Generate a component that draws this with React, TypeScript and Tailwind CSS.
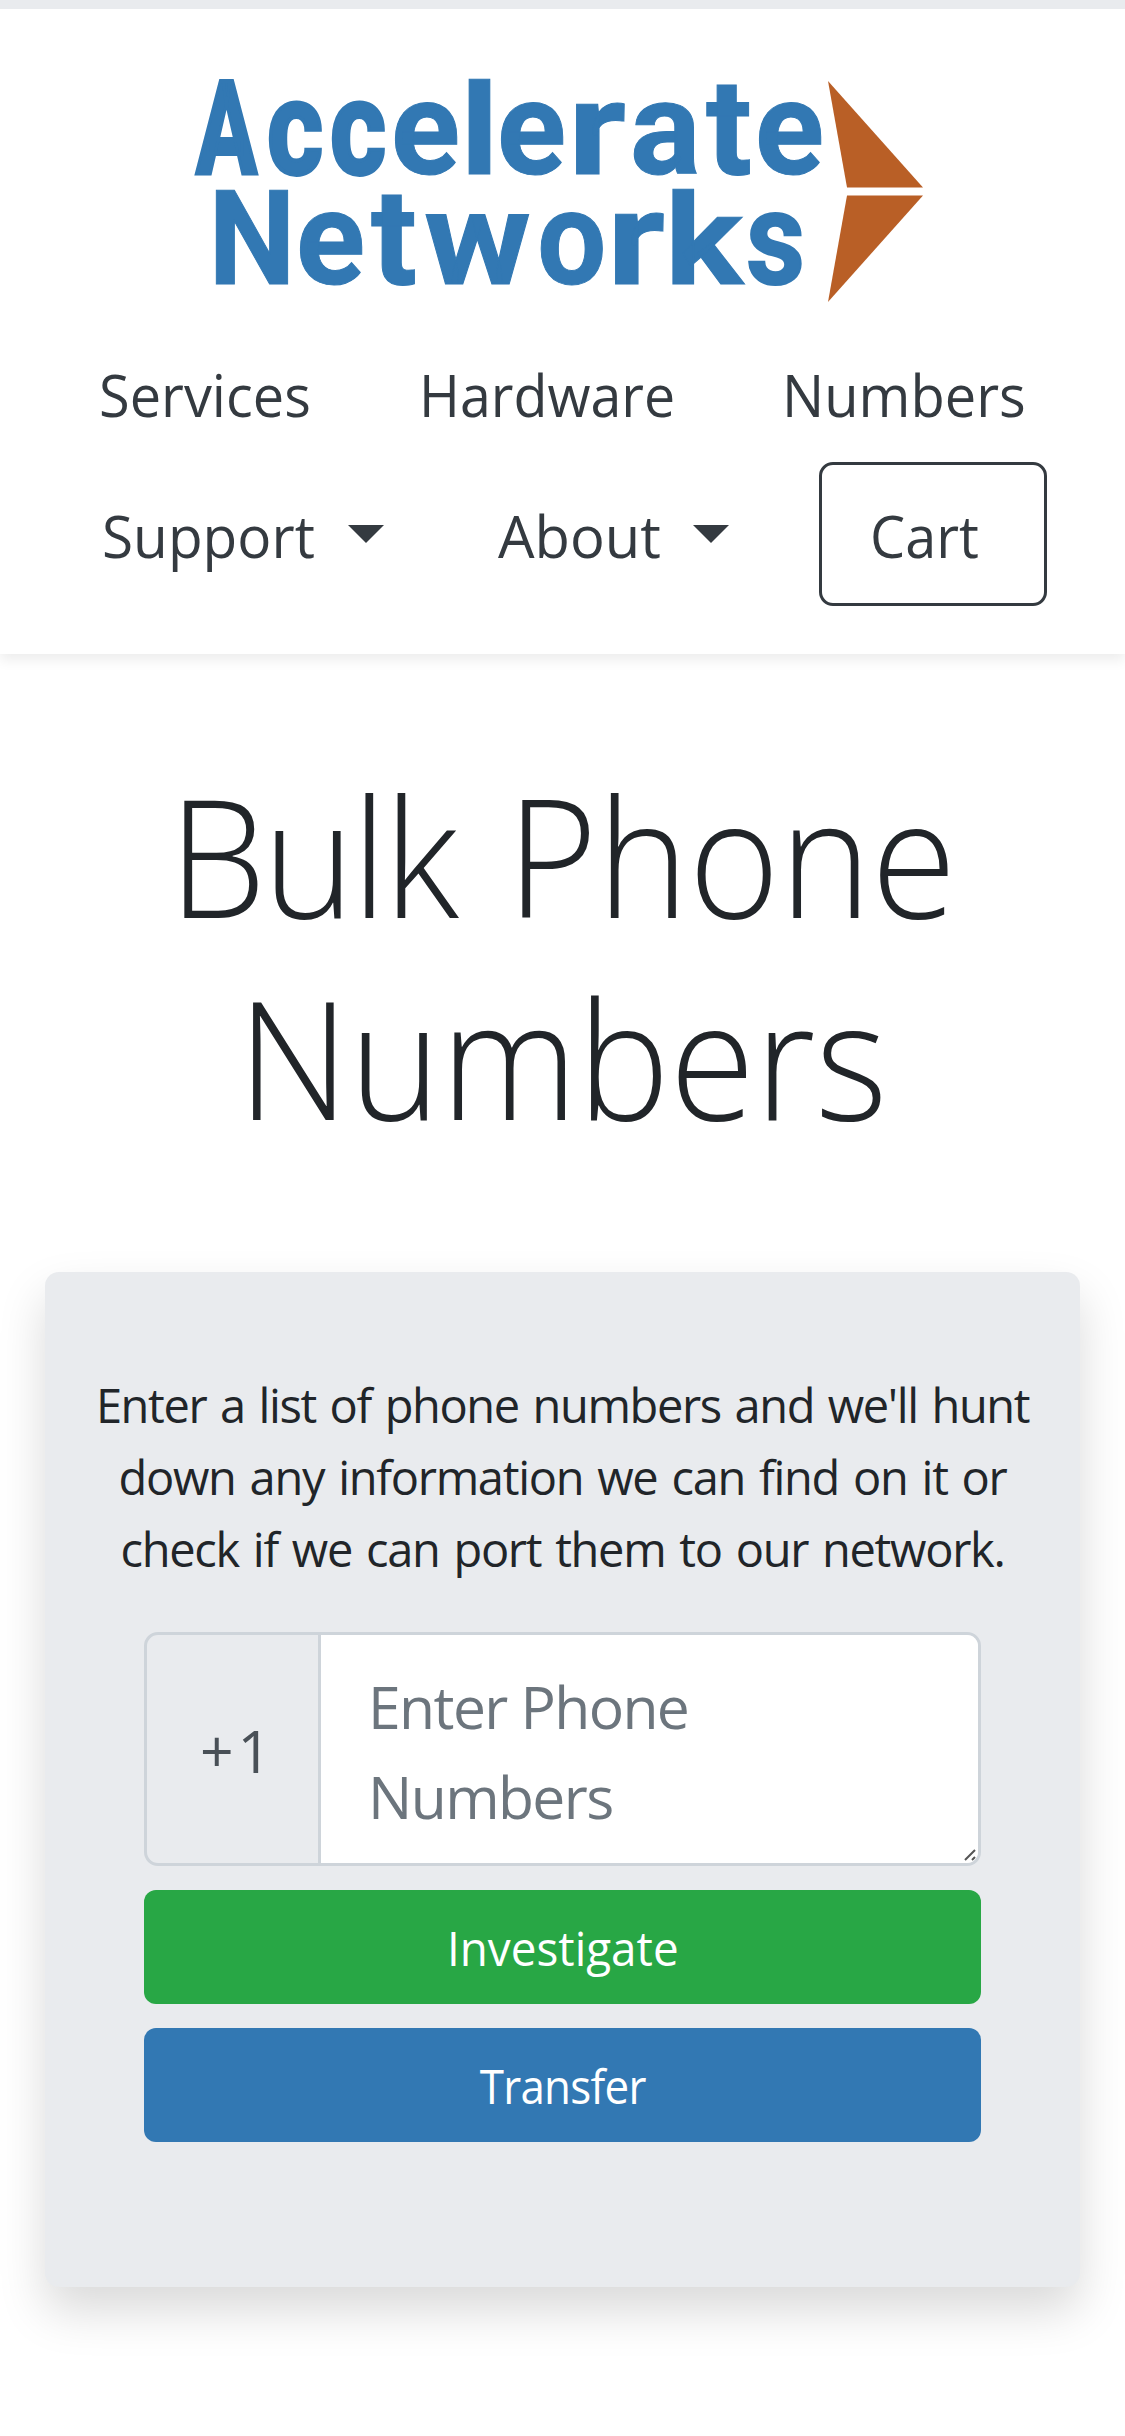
type Glyph = [char: string, x: number, advance: number, size?: number, outline?: number];

const lineOne: Glyph[] = [
  ["A", 196, 61, 130, 4], ["c", 267, 56, 132, 4], ["c", 330, 56, 132, 4], ["e", 391, 69], ["l", 460.2, 38.4, 126],
  ["e", 497, 69], ["r", 568, 58], ["a", 630, 70.6], ["t", 706, 46, 136], ["e", 755, 69],
];
const lineTwo: Glyph[] = [
  ["N", 208.5, 87], ["e", 296, 69], ["t", 371, 46, 136], ["w", 424, 107],
  ["o", 537.3, 69], ["r", 607, 58], ["k", 665, 78, 126], ["s", 746, 59, 132, 2],
];

function Word({ glyphs, y }: { glyphs: Glyph[]; y: number }) {
  return (
    <text y={y}>
      {glyphs.map(([char, x, advance, size = 132, outline = 1], i) => (
        <tspan key={i} x={x} textLength={advance} lengthAdjust="spacingAndGlyphs" fontSize={size} strokeWidth={outline}>
          {char}
        </tspan>
      ))}
    </text>
  );
}

function Logo() {
  return (
    <svg width="740" height="234" viewBox="190 74 740 234" className="block shrink-0" role="img">
      <g fill="#3278b3" stroke="#3278b3" fontFamily="Roboto, sans-serif" fontWeight="700">
        <Word glyphs={lineOne} y={173.5} />
        <Word glyphs={lineTwo} y={283.7} />
      </g>
      <polygon points="828,81 923,187.5 847,187.5" fill="#b95f26" />
      <polygon points="847,195.5 923,195.5 828,302" fill="#b95f26" />
    </svg>
  );
}

function Caret() {
  return <span className="mt-[35px] h-0 w-0 border-x-[18px] border-t-[18px] border-x-transparent border-t-[#343a40]" />;
}

export default function App() {
  return (
    <div className="min-h-[2436px] w-full overflow-hidden bg-white font-['Open_Sans',sans-serif] text-[#212529]">
      <header className="h-[654px] border-t-[9px] border-[#e9ebee] text-[58.8px] leading-[90px] text-[#343a40] shadow-[0_6px_12px_rgba(0,0,0,0.075)]">
        <div className="flex pt-[65px] pl-[190px]">
          <Logo />
        </div>
        <nav className="pt-[41px] whitespace-nowrap">
          <div className="grid grid-cols-[320px_363px_auto] pl-[99px]">
            <a><span className="inline-block origin-left scale-x-[0.951]">Services</span></a>
            <a><span className="inline-block origin-left scale-x-[0.944]">Hardware</span></a>
            <a><span className="inline-block origin-left scale-x-[0.953]">Numbers</span></a>
          </div>
          <div className="mt-[23px] flex h-[144px]">
            <a className="ml-[102px] flex w-[396px] pt-[28px]">
              <span className="w-[246px]"><span className="inline-block origin-left scale-x-[0.965]">Support</span></span>
              <Caret />
            </a>
            <a className="flex w-[321px] pt-[28px]">
              <span className="w-[195px]"><span className="inline-block origin-left scale-x-[0.984]">About</span></span>
              <Caret />
            </a>
            <a className="h-[144px] w-[228px] rounded-[14px] border-[3px] border-[#343a40] pt-[25px] pl-[48px]">
              <span className="inline-block origin-left scale-x-[0.949]">Cart</span>
            </a>
          </div>
        </nav>
      </header>

      <main>
        <h1 className="mt-[100px] scale-x-[0.941] text-center text-[164.7px] leading-[201.6px] font-light">
          <span className="tracking-[-3px]">Bulk</span>
          <span className="[word-spacing:11px]"> Phone</span>
          <br />
          Numbers
        </h1>

        <section className="mx-[45px] mt-[115px] h-[1015px] rounded-[14px] bg-[#e9ebee] pt-[97px] text-[47px] leading-[72px] shadow-[0_24px_48px_rgba(0,0,0,0.15)]">
          <p className="text-center whitespace-nowrap">
            <span className="tracking-[-1.4px] [word-spacing:3px]">Enter a list of phone numbers and we'll hunt</span>
            <br />
            <span className="tracking-[-1.3px] [word-spacing:3.1px]">down any information we can find on it or</span>
            <br />
            <span className="tracking-[-1.3px] [word-spacing:3px]">check if we can port them to our network.</span>
          </p>
          <form className="mt-[47px] px-[99px]">
            <div className="relative flex h-[234px] overflow-hidden rounded-[14px] border-[3px] border-[#ced4da] text-[58.8px] leading-[90px]">
              <span className="flex w-[174px] items-center border-r-[3px] border-[#ced4da] pt-[2px] pl-[53px] tracking-[4px] text-[#495057]">+1</span>
              <textarea
                placeholder="Enter Phone Numbers"
                className="block h-[228px] flex-1 resize-none overflow-hidden bg-white pt-[26px] pr-[170px] pl-[47px] tracking-[-1.6px] placeholder:text-[#6c757d]"
              />
              <svg className="absolute right-[2px] bottom-[2px]" width="12" height="12" viewBox="0 0 12 12" fill="none" stroke="#555" strokeWidth="2">
                <path d="M1 11 L11 1 M8 11 L11 8" />
              </svg>
            </div>
            <button type="button" className="mt-[24px] block h-[114px] w-full rounded-[12px] bg-[#28a745] pt-[1px] text-white">
              <span className="inline-block scale-x-[0.975]">Investigate</span>
            </button>
            <button type="button" className="mt-[24px] block h-[114px] w-full rounded-[12px] bg-[#3278b3] pt-[1px] tracking-[-0.8px] text-white">
              <span className="inline-block scale-x-[0.935]">Transfer</span>
            </button>
          </form>
        </section>
      </main>
    </div>
  );
}
